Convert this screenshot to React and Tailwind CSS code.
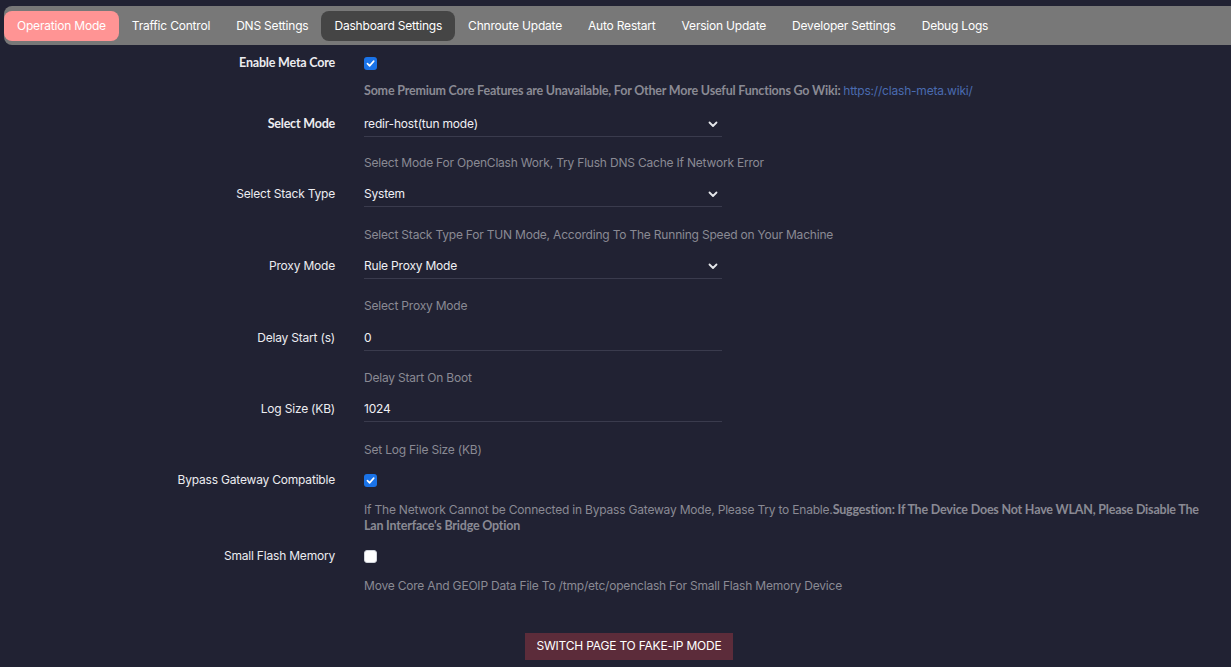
import { useState } from 'react';

const tabs = [
  'Operation Mode',
  'Traffic Control',
  'DNS Settings',
  'Dashboard Settings',
  'Chnroute Update',
  'Auto Restart',
  'Version Update',
  'Developer Settings',
  'Debug Logs',
];

const inter = { fontFamily: 'Inter, "Liberation Sans", sans-serif', letterSpacing: '-0.2px' };
const lato = { fontFamily: 'Lato, "Liberation Sans", sans-serif' };

function Chevron() {
  return (
    <svg width="12" height="12" viewBox="0 0 12 12" className="text-gray-200">
      <path d="M2.5 4.5 L6 8 L9.5 4.5" fill="none" stroke="currentColor" strokeWidth="1.8" strokeLinecap="round" strokeLinejoin="round" />
    </svg>
  );
}

function Checkbox({ checked }) {
  return checked ? (
    <span className="w-[13px] h-[13px] rounded-[3px] bg-[#1a73e8] flex items-center justify-center">
      <svg width="9" height="9" viewBox="0 0 10 10">
        <path d="M1.6 5.2 L4 7.6 L8.6 2.4" fill="none" stroke="white" strokeWidth="1.8" strokeLinecap="round" strokeLinejoin="round" />
      </svg>
    </span>
  ) : (
    <span className="w-[13px] h-[13px] rounded-[3px] bg-white border border-gray-300" />
  );
}

function Row({ label, bold, children }) {
  return (
    <div className="flex items-center">
      <div
        className={`w-[335px] shrink-0 text-right text-[#ececf0] ${bold ? 'font-bold text-[12.5px]' : 'text-[12px]'}`}
        style={bold ? lato : inter}
      >
        {label}
      </div>
      <div className="ml-[29px] flex items-center">{children}</div>
    </div>
  );
}

function Hint({ children, bold, className = '' }) {
  return (
    <div
      className={`ml-[364px] leading-[16px] text-[#8a8a94] ${bold ? 'font-bold text-[12.5px]' : 'text-[12px]'} ${className}`}
      style={bold ? lato : inter}
    >
      {children}
    </div>
  );
}

function SelectBox({ value }) {
  return (
    <div className="w-[358px] h-[26px] border-b border-[#3a3b4d] flex items-center justify-between pr-[3px]">
      <span className="text-[12px] text-[#f0f0f4]" style={inter}>{value}</span>
      <Chevron />
    </div>
  );
}

function TextBox({ value }) {
  return (
    <div className="w-[358px] h-[26px] border-b border-[#3a3b4d] flex items-center">
      <span className="text-[12px] text-[#f0f0f4]" style={inter}>{value}</span>
    </div>
  );
}

export default function App() {
  const [active, setActive] = useState(0);

  return (
    <div className="min-h-screen bg-[#212233] overflow-hidden" style={inter}>
      {/* tab bar */}
      <div className="pt-[6px] pl-[4px]">
        <div className="bg-[#787878] rounded-l-lg h-[39px] flex items-center">
          {tabs.map((t, i) => (
            <button
              key={t}
              onClick={() => setActive(i)}
              className={`h-[30px] px-[13px] rounded-lg text-[12px] whitespace-nowrap text-white ${
                i === active ? 'bg-[#ff9494]' : i === 3 ? 'bg-[#454545]' : ''
              }`}
              style={inter}
            >
              {t}
            </button>
          ))}
        </div>
      </div>

      <div className="pt-[5px]">
        <Row label="Enable Meta Core" bold>
          <div className="h-[26px] flex items-center"><Checkbox checked /></div>
        </Row>
        <Hint bold className="mt-[7px]">
          Some Premium Core Features are Unavailable, For Other More Useful Functions Go Wiki:{' '}
          <span className="font-normal text-[12px] text-[#4a6bb0]" style={inter}>https://clash-meta.wiki/</span>
        </Hint>

        <div className="mt-[12px]">
          <Row label="Select Mode" bold><SelectBox value="redir-host(tun mode)" /></Row>
        </div>
        <Hint className="mt-[18px]">Select Mode For OpenClash Work, Try Flush DNS Cache If Network Error</Hint>

        <div className="mt-[10px]">
          <Row label="Select Stack Type"><SelectBox value="System" /></Row>
        </div>
        <Hint className="mt-[20px]">Select Stack Type For TUN Mode, According To The Running Speed on Your Machine</Hint>

        <div className="mt-[10px]">
          <Row label="Proxy Mode"><SelectBox value="Rule Proxy Mode" /></Row>
        </div>
        <Hint className="mt-[19px]">Select Proxy Mode</Hint>

        <div className="mt-[11px]">
          <Row label="Delay Start (s)"><TextBox value="0" /></Row>
        </div>
        <Hint className="mt-[19px]">Delay Start On Boot</Hint>

        <div className="mt-[10px]">
          <Row label="Log Size (KB)"><TextBox value="1024" /></Row>
        </div>
        <Hint className="mt-[20px]">Set Log File Size (KB)</Hint>

        <div className="mt-[9px]">
          <Row label="Bypass Gateway Compatible">
            <div className="h-[26px] flex items-center"><Checkbox checked /></div>
          </Row>
        </div>
        <Hint className="mt-[9px] w-[845px] leading-[15px]">
          If The Network Cannot be Connected in Bypass Gateway Mode, Please Try to Enable.
          <span className="font-bold text-[12.5px]" style={lato}>
            Suggestion: If The Device Does Not Have WLAN, Please Disable The Lan Interface's Bridge Option
          </span>
        </Hint>

        <div className="mt-[9px]">
          <Row label="Small Flash Memory">
            <div className="h-[26px] flex items-center"><Checkbox /></div>
          </Row>
        </div>
        <Hint className="mt-[9px]">Move Core And GEOIP Data File To /tmp/etc/openclash For Small Flash Memory Device</Hint>

        <div className="mt-[38px] pl-[525px]">
          <button className="w-[208px] h-[27px] bg-[#5c2c3a] text-white text-[12px] uppercase" style={inter}>
            Switch Page To Fake-IP Mode
          </button>
        </div>
      </div>
    </div>
  );
}
